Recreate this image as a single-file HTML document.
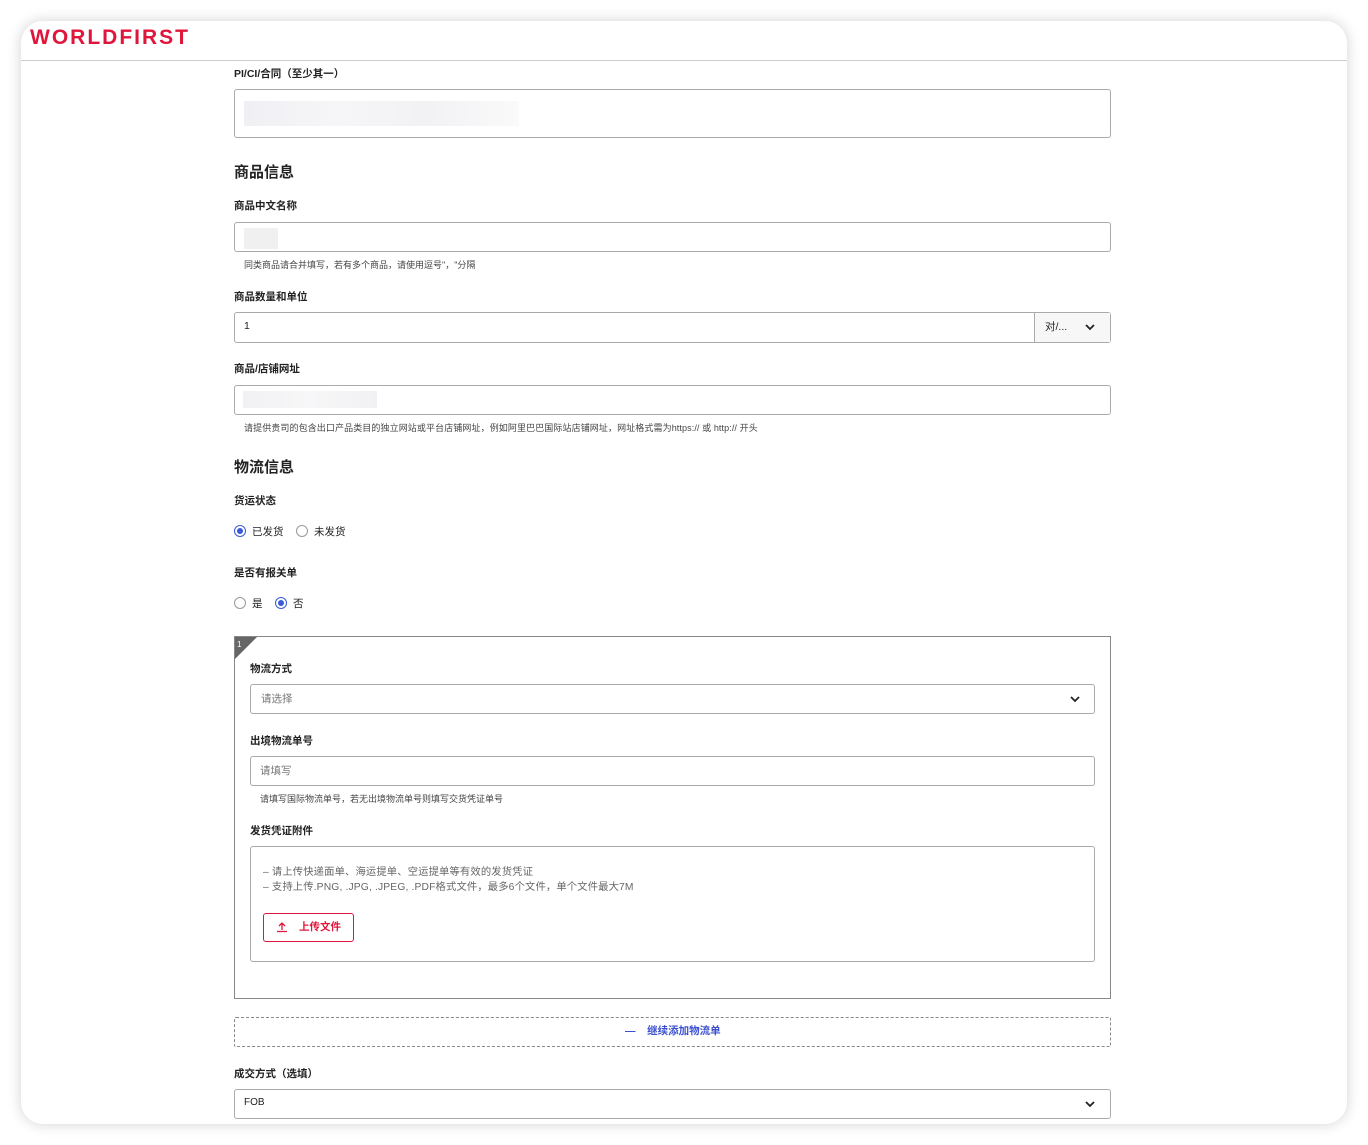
<!DOCTYPE html>
<html><head><meta charset="utf-8"><style>
*{box-sizing:border-box;margin:0;padding:0}
body{width:1368px;height:1145px;background:#fff;font-family:"Liberation Sans","Noto Sans CJK SC",sans-serif;color:#222;position:relative;overflow:hidden}
.card{position:absolute;left:21px;top:21px;width:1326px;height:1103px;background:#fff;border-radius:22px;box-shadow:0 0 14px rgba(0,0,0,.18);overflow:hidden}
.hdr{position:absolute;left:0;top:0;width:100%;height:40px;border-bottom:1px solid #ccc}
.logo{position:absolute;left:9px;top:5px;color:#e0153b;font-weight:bold;font-size:21px;letter-spacing:2px}
.a{position:absolute}
.lbl{font-size:10.5px;font-weight:bold;color:#222}
.h{font-size:15px;font-weight:bold;color:#222}
.inp{position:absolute;border:1px solid #aaa;border-radius:3px;background:#fff}
.hint{font-size:9px;color:#444}
.ph{font-size:10.5px;color:#777}
.rad{position:absolute;width:12px;height:12px;border:1px solid #999;border-radius:50%;background:#fff}
.rad.on{border-color:#3a5bd9}
.rad.on:after{content:"";position:absolute;left:2px;top:2px;width:6px;height:6px;border-radius:50%;background:#3a5bd9}
.rt{font-size:10.5px;color:#222}
.chev{position:absolute;width:12px;height:8px}
</style></head><body>
<div class="card">
<div class="hdr"><div class="logo">WORLDFIRST</div></div>
</div>
<div class="a lbl" style="left:234px;top:66px">PI/CI/合同（至少其一）</div>
<div class="inp" style="left:234px;top:89px;width:877px;height:49px"></div>
<div class="a" style="left:244px;top:101px;width:275px;height:25px;background:linear-gradient(90deg,#f0f0f4,#f6f6f8,#f2f2f5,#fafafa)"></div>
<div class="a h" style="left:234px;top:161px">商品信息</div>
<div class="a lbl" style="left:234px;top:198px">商品中文名称</div>
<div class="inp" style="left:234px;top:222px;width:877px;height:30px"></div>
<div class="a" style="left:244px;top:228px;width:34px;height:21px;background:#f0f0f0"></div>
<div class="a hint" style="left:244px;top:258px">同类商品请合并填写，若有多个商品，请使用逗号"，"分隔</div>
<div class="a lbl" style="left:234px;top:289px">商品数量和单位</div>
<div class="inp" style="left:234px;top:312px;width:877px;height:31px"></div>
<div class="a" style="left:1034px;top:313px;width:76px;height:29px;border-left:1px solid #aaa;background:#f7f7f7"></div>
<div class="a rt" style="left:244px;top:320px">1</div>
<div class="a rt" style="left:1045px;top:319px">对/...</div>
<svg class="chev" style="left:1084px;top:323px" viewBox="0 0 12 8"><path d="M2 2l4 4 4-4" fill="none" stroke="#222" stroke-width="1.8"/></svg>
<div class="a lbl" style="left:234px;top:361px">商品/店铺网址</div>
<div class="inp" style="left:234px;top:385px;width:877px;height:30px"></div>
<div class="a" style="left:243px;top:391px;width:134px;height:17px;background:linear-gradient(90deg,#f1f1f3,#f7f7f8,#f1f1f3)"></div>
<div class="a hint" style="left:244px;top:421px;letter-spacing:0.1px">请提供贵司的包含出口产品类目的独立网站或平台店铺网址，例如阿里巴巴国际站店铺网址，网址格式需为https:// 或 http:// 开头</div>
<div class="a h" style="left:234px;top:456px">物流信息</div>
<div class="a lbl" style="left:234px;top:493px">货运状态</div>
<div class="rad on" style="left:234px;top:525px"></div><div class="a rt" style="left:252px;top:524px">已发货</div>
<div class="rad" style="left:296px;top:525px"></div><div class="a rt" style="left:314px;top:524px">未发货</div>
<div class="a lbl" style="left:234px;top:565px">是否有报关单</div>
<div class="rad" style="left:234px;top:597px"></div><div class="a rt" style="left:252px;top:596px">是</div>
<div class="rad on" style="left:275px;top:597px"></div><div class="a rt" style="left:293px;top:596px">否</div>
<div class="a" style="left:234px;top:636px;width:877px;height:363px;border:1px solid #888"></div>
<svg class="a" style="left:235px;top:637px" width="22" height="22"><path d="M0 0H22L0 22Z" fill="#666"/><text x="2" y="10" font-size="8" fill="#fff" font-family="Liberation Sans">1</text></svg>
<div class="a lbl" style="left:250px;top:661px">物流方式</div>
<div class="inp" style="left:250px;top:684px;width:845px;height:30px"></div>
<div class="a ph" style="left:261px;top:691px">请选择</div>
<svg class="chev" style="left:1069px;top:695px" viewBox="0 0 12 8"><path d="M2 2l4 4 4-4" fill="none" stroke="#222" stroke-width="1.8"/></svg>
<div class="a lbl" style="left:250px;top:733px">出境物流单号</div>
<div class="inp" style="left:250px;top:756px;width:845px;height:30px"></div>
<div class="a ph" style="left:260px;top:763px">请填写</div>
<div class="a hint" style="left:260px;top:792px">请填写国际物流单号，若无出境物流单号则填写交货凭证单号</div>
<div class="a lbl" style="left:250px;top:823px">发货凭证附件</div>
<div class="inp" style="left:250px;top:846px;width:845px;height:116px"></div>
<div class="a" style="left:263px;top:865px;font-size:10.3px;color:#666;line-height:15px;letter-spacing:0.15px">– 请上传快递面单、海运提单、空运提单等有效的发货凭证<br>– 支持上传.PNG, .JPG, .JPEG, .PDF格式文件，最多6个文件，单个文件最大7M</div>
<div class="a" style="left:263px;top:913px;width:91px;height:29px;border:1px solid #e0153b;border-radius:3px"></div>
<svg class="a" style="left:276px;top:921px" width="12" height="12" viewBox="0 0 12 12"><path d="M6 9V2M3 5l3-3 3 3M1 10.5h10" fill="none" stroke="#e0153b" stroke-width="1.3"/></svg>
<div class="a" style="left:299px;top:919px;font-size:10.5px;color:#e0153b;font-weight:bold">上传文件</div>
<div class="a" style="left:234px;top:1017px;width:877px;height:30px;border:1px dashed #888;border-radius:2px"></div>
<div class="a" style="left:625px;top:1023px;font-size:10.5px;color:#3a4fd0;font-weight:bold">—&nbsp;&nbsp;&nbsp;&nbsp;继续添加物流单</div>
<div class="a lbl" style="left:234px;top:1066px">成交方式（选填）</div>
<div class="inp" style="left:234px;top:1089px;width:877px;height:30px"></div>
<div class="a rt" style="left:244px;top:1097px;font-size:10px">FOB</div>
<svg class="chev" style="left:1084px;top:1100px" viewBox="0 0 12 8"><path d="M2 2l4 4 4-4" fill="none" stroke="#222" stroke-width="1.8"/></svg>
</body></html>
